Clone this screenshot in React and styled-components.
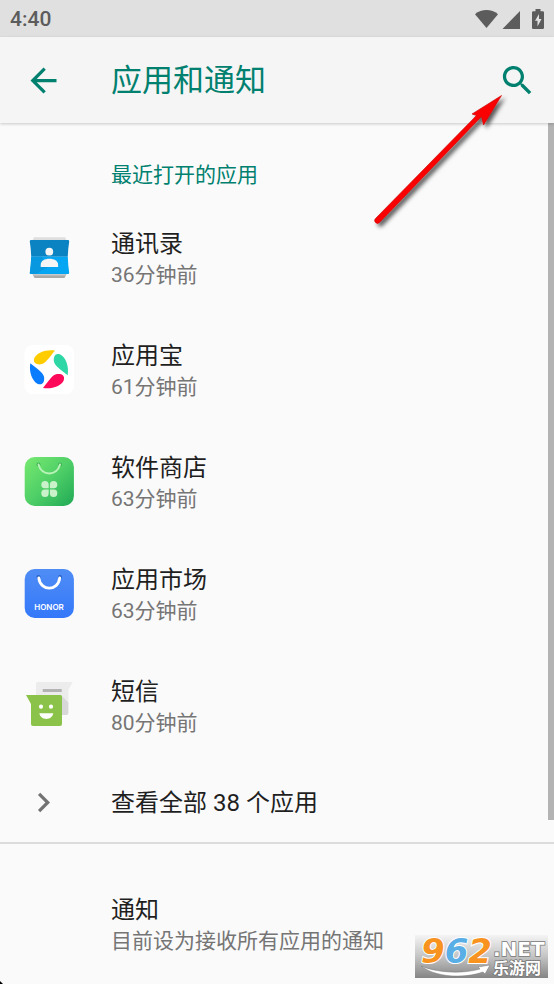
import styled, { createGlobalStyle } from 'styled-components'

const GlobalStyle = createGlobalStyle`
    * {
        box-sizing: border-box;
    }

    body {
        margin: 0;
        background-color: #fafafa;
        font-family: Roboto, "Noto Sans CJK SC", sans-serif;
    }

    h1, h2, ul {
        margin: 0;
        padding: 0;
        font-weight: 400;
        list-style: none;
    }

    button {
        border: none;
        background: none;
        padding: 0;
        color: inherit;
        font: inherit;
        cursor: pointer;
    }

    svg {
        display: block;
        flex-shrink: 0;
    }
`

const Screen = styled.div`
    position: relative;
    display: flex;
    flex-direction: column;
    min-height: 100vh;
    overflow: hidden;
`

const StatusBar = styled.div`
    display: flex;
    align-items: center;
    justify-content: space-between;
    height: 37px;
    padding: 0 8px 0 10px;
    background-color: #e0e0e0;
    color: #5c5c5c;
    font-size: 21px;
    font-weight: 500;
`

const Header = styled.header`
    position: relative;
    z-index: 1;
    display: flex;
    align-items: center;
    height: 86px;
    padding: 0 17px 0 24px;
    background-color: #f5f5f5;
    box-shadow: 0 1px 3px rgba(0, 0, 0, 0.2);
    color: #00806f;
`

const Title = styled.h1`
    flex: 1;
    margin-left: 48px;
    padding-top: 2px;
    font-size: 31px;
    line-height: 40px;
`

const Content = styled.main`
    position: relative;
    flex: 1;
`

const ScrollThumb = styled.div`
    position: absolute;
    top: 0;
    right: 0;
    width: 6px;
    height: 81%;
    background-color: #b3b3b3;
`

const SectionTitle = styled.h2`
    padding: 36px 24px 11px 111px;
    color: #00806f;
    font-size: 21px;
    line-height: 32px;
`

const Row = styled.button`
    display: flex;
    align-items: center;
    width: 100%;
    height: ${({ $short }) => ($short ? '80px' : '112px')};
    padding: 0 24px;
    text-align: left;
`

const RowIcon = styled.span`
    width: 87px;
    flex-shrink: 0;
    color: #737373;
`

const RowText = styled.span`
    display: flex;
    flex-direction: column;
    padding-top: 2px;
`

const RowTitle = styled.span`
    color: #1f1f1f;
    font-size: 24px;
    line-height: 32px;
`

const RowSummary = styled.span`
    color: #757575;
    font-size: 21px;
    line-height: 30px;
`

const Section = styled.section`
    padding-top: 24px;
    border-top: 2px solid #dcdcdc;
`

const Pointer = styled.svg`
    position: absolute;
    z-index: 2;
    top: 88px;
    right: 44px;
    pointer-events: none;
`

const Watermark = styled.svg`
    position: absolute;
    right: 6px;
    bottom: 6px;
    overflow: visible;
`

const Corner = styled.svg`
    position: absolute;
    left: 0;
    bottom: 0;
`

const StatusIcons = () => (
    <svg width="72" height="24" viewBox="0 0 72 24" fill="#5c5c5c">
        <path d="M1 7.2C7.500 1.600 17.500 1.600 24 7.200L12.500 21Z" />
        <path d="M46 4v18H28.500Z" />
        <path
            fillRule="evenodd"
            d="M61.500 2h5v2.200h2.300q1.200 0 1.200 1.200v15.400q0 1.200-1.200 1.200h-9.600q-1.200 0-1.200-1.200V5.400q0-1.200 1.200-1.200h2.300ZM65 7l-4 6.800h2.500V19.500L67.500 12H65Z"
        />
    </svg>
)

const BackIcon = () => (
    <svg width="39" height="39" viewBox="0 0 24 24" fill="currentColor">
        <path d="M20 11H7.830l5.590-5.590L12 4l-8 8 8 8 1.410-1.410L7.830 13H20z" />
    </svg>
)

const SearchIcon = () => (
    <svg width="39" height="39" viewBox="0 0 24 24" fill="currentColor">
        <path d="M15.500 14h-.79l-.28-.27C15.410 12.590 16 11.110 16 9.500 16 5.910 13.090 3 9.500 3S3 5.910 3 9.500 5.910 16 9.500 16c1.610 0 3.090-.59 4.230-1.570l.27.28v.79l5 4.990L20.490 19l-4.990-5zm-6 0C7.010 14 5 11.990 5 9.500S7.010 5 9.500 5 14 7.010 14 9.500 11.990 14 9.500 14z" />
    </svg>
)

const ChevronIcon = () => (
    <svg width="39" height="39" viewBox="0 0 24 24" fill="currentColor">
        <path d="M10 6L8.590 7.410 13.170 12l-4.580 4.590L10 18l6-6z" />
    </svg>
)

const ContactsIcon = () => (
    <svg width="50" height="50" viewBox="0 0 50 50">
        <path d="M10 4.300h31l2 4H8Z" fill="#dedede" />
        <path d="M8 40h35l-2.500 5h-30Z" fill="#a9a9a9" />
        <path d="M8 39h35l-1.500 3.500h-32Z" fill="#c9c9c9" />
        <path d="M7 7h37q1.400 0 1.200 1.500Q44 16 43.800 23.700H7.200Q7 16 5.800 8.500 5.600 7 7 7Z" fill="#0b83c3" />
        <path d="M7.200 23.700h36.600Q44 32 45.200 39.800 45.200 41 44 41H7q-1.400 0-1.200-1.200Q7 32 7.200 23.700Z" fill="#04a5f2" />
        <path d="M7.200 23.700h10.500L24 34 12 41H7q-1.400 0-1.200-1.200Q7 32 7.200 23.700Z" fill="#0798e0" />
        <circle cx="25.300" cy="18.700" r="3.900" fill="#f5f5f5" />
        <path d="M16.700 34v-2.200c0-4 4-6 8.700-6s8.700 2 8.700 6V34Z" fill="#f5f5f5" />
    </svg>
)

const leaves = ['#ffcc00', '#2fd6a6', '#ff0a5b', '#0a7cff']

const YybIcon = () => (
    <svg width="50" height="50" viewBox="0 0 50 50">
        <rect x="0.500" y="0" width="49.500" height="49" rx="8" fill="#fff" />
        {leaves.map((color, i) => (
            <path
                key={color}
                d="M31 5.500C22 4 13 7.500 10.300 13 8.600 18 12.500 19.800 17 19.300 21.500 18.500 24.500 13.500 31 5.500Z"
                fill={color}
                transform={`rotate(${i * 90} 25 24.200)`}
            />
        ))}
    </svg>
)

const StoreIcon = () => (
    <svg width="50" height="50" viewBox="0 0 50 50">
        <defs>
            <linearGradient id="store" x1="0" y1="0" x2="1" y2="1">
                <stop offset="0" stopColor="#78ea70" />
                <stop offset="0.500" stopColor="#4fcf67" />
                <stop offset="1" stopColor="#20a955" />
            </linearGradient>
        </defs>
        <rect x="0.700" y="0" width="49.200" height="49" rx="10" fill="url(#store)" />
        <circle cx="14.500" cy="7.500" r="2" fill="#3faf55" />
        <circle cx="36" cy="7.500" r="2" fill="#3faf55" />
        <path d="M14.500 7.500C17.500 19.500 33 19.500 36 7.500" fill="none" stroke="#b9f3b8" strokeWidth="2" strokeLinecap="round" />
        <g fill="#c9f2cb">
            <path d="M24.700 31.300h-4a3.700 3.700 0 1 1 4-3.800Z" />
            <path d="M25.900 31.300h4a3.700 3.700 0 1 0-4-3.800Z" />
            <path d="M24.700 32.600h-4a3.700 3.700 0 1 0 4 3.800Z" />
            <path d="M25.900 32.600h4a3.700 3.700 0 1 1-4 3.800Z" />
        </g>
    </svg>
)

const HonorIcon = () => (
    <svg width="50" height="50" viewBox="0 0 50 50">
        <defs>
            <linearGradient id="honor" x1="0" y1="0" x2="0" y2="1">
                <stop offset="0" stopColor="#4f8df5" />
                <stop offset="1" stopColor="#3478fa" />
            </linearGradient>
        </defs>
        <rect x="0.700" y="0" width="49.200" height="49" rx="10" fill="url(#honor)" />
        <circle cx="14.500" cy="8" r="2" fill="#2b62c4" />
        <circle cx="36" cy="8" r="2" fill="#2b62c4" />
        <path d="M14.800 9C16.500 22.500 34 22.500 35.700 9" fill="none" stroke="#fff" strokeWidth="2.800" strokeLinecap="round" />
        <text x="25" y="41" textAnchor="middle" fill="#fff" fontFamily="Inter, sans-serif" fontSize="8" fontWeight="600">HONOR</text>
    </svg>
)

const MessagesIcon = () => (
    <svg width="50" height="50" viewBox="0 0 50 50">
        <path d="M13.500 1h35.200L44.300 9v23q0 2-2 2H14q-2 0-2-2V2.500Q12 1 13.500 1Z" fill="#ececec" />
        <path d="M38 15l6.300 6.500V32q0 2-2 2H36Z" fill="#d8d8d8" />
        <rect x="18.700" y="8" width="19" height="3" fill="#b3b3b3" />
        <path d="M2 14h34.500q1.500 0 1.500 1.500V43q0 2-2 2H9q-2 0-2-2V23Z" fill="#8bc34a" />
        <circle cx="17" cy="25.700" r="2.100" fill="#fff" />
        <circle cx="27" cy="25.700" r="2.100" fill="#fff" />
        <path d="M15.300 32.300h14C28.500 36 25.500 38 22.300 38s-6.200-2-7-5.700Z" fill="#fff" />
    </svg>
)

const apps = [
    { name: '通讯录', time: '36分钟前', Icon: ContactsIcon },
    { name: '应用宝', time: '61分钟前', Icon: YybIcon },
    { name: '软件商店', time: '63分钟前', Icon: StoreIcon },
    { name: '应用市场', time: '63分钟前', Icon: HonorIcon },
    { name: '短信', time: '80分钟前', Icon: MessagesIcon },
]

const ArrowPointer = () => (
    <Pointer width="140" height="144" viewBox="0 0 140 144">
        <defs>
            <filter id="shade" x="-20%" y="-20%" width="140%" height="140%">
                <feDropShadow dx="3" dy="3" stdDeviation="2" floodColor="#000" floodOpacity="0.650" />
            </filter>
        </defs>
        <path
            d="M131.500 7.500L113.500 37l-2-8.500L9.500 134.500a2.500 2.500 0 0 1-4-4L106.500 27.500 102 26Z"
            fill="#fb0505"
            stroke="#c80000"
            strokeWidth="0.600"
            filter="url(#shade)"
        />
    </Pointer>
)

const SiteMark = () => (
    <Watermark width="133" height="43" viewBox="0 0 133 43">
        <defs>
            <linearGradient id="mark" x1="0" y1="0" x2="0" y2="1">
                <stop offset="0" stopColor="#f4f4f4" />
                <stop offset="0.500" stopColor="#c4c4c4" />
                <stop offset="1" stopColor="#858585" />
            </linearGradient>
        </defs>
        <rect width="133" height="43" fill="url(#mark)" />
        <path d="M6 31C22 38 48 39 65 34l-2-2 12-2-5 9-2-2C48 44 20 42 6 31Z" fill="#fff" stroke="#777" strokeWidth="0.500" />
        <text
            x="6"
            y="28"
            fontFamily='"DejaVu Sans", sans-serif'
            fontSize="34"
            fontWeight="700"
            fontStyle="italic"
            stroke="#fff"
            strokeWidth="2"
            paintOrder="stroke"
        >
            <tspan fill="#f7931e">9</tspan>
            <tspan fill="#5aaee6">6</tspan>
            <tspan fill="#f7931e">2</tspan>
        </text>
        <g fill="#fff" stroke="#777" strokeWidth="1.500" paintOrder="stroke" fontWeight="700">
            <text x="78" y="21" fontFamily='"DejaVu Sans", sans-serif' fontSize="20">.NET</text>
            <text x="78" y="39" fontFamily='"Noto Sans CJK SC", sans-serif' fontSize="16">乐游网</text>
        </g>
    </Watermark>
)

const App = () => {
    return (
        <Screen>
            <GlobalStyle />
            <StatusBar>
                <span>4:40</span>
                <StatusIcons />
            </StatusBar>
            <Header>
                <button aria-label="返回"><BackIcon /></button>
                <Title>应用和通知</Title>
                <button aria-label="搜索"><SearchIcon /></button>
            </Header>
            <Content>
                <SectionTitle>最近打开的应用</SectionTitle>
                <ul>
                    {apps.map(({ name, time, Icon }) => (
                        <li key={name}>
                            <Row>
                                <RowIcon><Icon /></RowIcon>
                                <RowText>
                                    <RowTitle>{name}</RowTitle>
                                    <RowSummary>{time}</RowSummary>
                                </RowText>
                            </Row>
                        </li>
                    ))}
                </ul>
                <Row $short>
                    <RowIcon><ChevronIcon /></RowIcon>
                    <RowText>
                        <RowTitle>查看全部 38 个应用</RowTitle>
                    </RowText>
                </Row>
                <Section>
                    <Row>
                        <RowIcon />
                        <RowText>
                            <RowTitle>通知</RowTitle>
                            <RowSummary>目前设为接收所有应用的通知</RowSummary>
                        </RowText>
                    </Row>
                </Section>
                <ScrollThumb />
            </Content>
            <ArrowPointer />
            <SiteMark />
            <Corner width="3" height="3" viewBox="0 0 3 3">
                <path d="M0 0L3 3H0Z" />
            </Corner>
        </Screen>
    )
}

export default App
